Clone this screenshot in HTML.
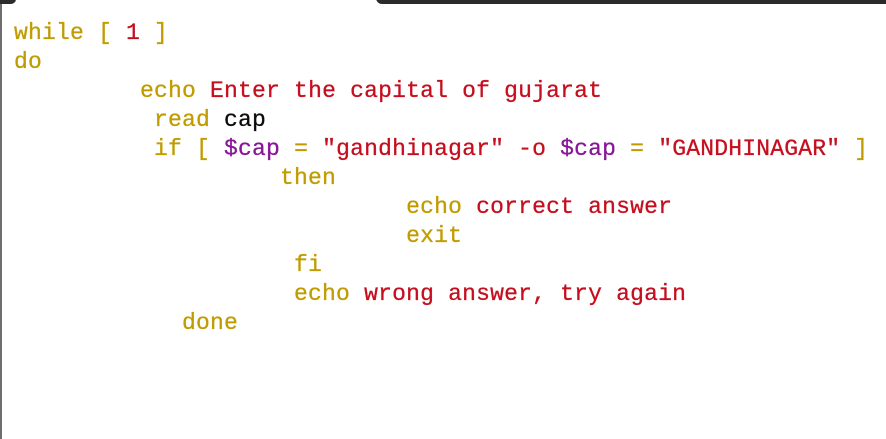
<!DOCTYPE html>
<html><head><meta charset="utf-8"><style>
html,body{margin:0;padding:0;width:886px;height:439px;background:#fff;overflow:hidden;position:relative}
.lb{position:absolute;left:0;top:4px;width:2px;height:435px;background:#6e6e6e}
.tl{position:absolute;left:0;top:-6px;width:16px;height:10px;background:#2b2b2b;border-radius:0 0 5px 0}
.tr{position:absolute;left:376px;top:-6px;width:520px;height:10px;background:#2b2b2b;border-radius:0 0 0 6px}
pre{position:absolute;left:14px;top:19px;margin:0;font-family:"Liberation Mono",monospace;font-size:23px;line-height:29px;color:#c19c00;letter-spacing:0.2px;-webkit-text-stroke:0.3px currentColor}
.r{color:#c50f1f}.p{color:#881798}.k{color:#0c0c0c}
</style></head><body>
<div class="lb"></div><div class="tl"></div><div class="tr"></div>
<pre>while [ <span class="r">1</span> ]
do
         echo <span class="r">Enter the capital of gujarat</span>
          read <span class="k">cap</span>
          if [ <span class="p">$cap</span> = <span class="r">"gandhinagar"</span> <span class="r">-o</span> <span class="p">$cap</span> = <span class="r">"GANDHINAGAR"</span> ]
                   then
                            echo <span class="r">correct answer</span>
                            exit
                    fi
                    echo <span class="r">wrong answer, try again</span>
            done</pre>
</body></html>
